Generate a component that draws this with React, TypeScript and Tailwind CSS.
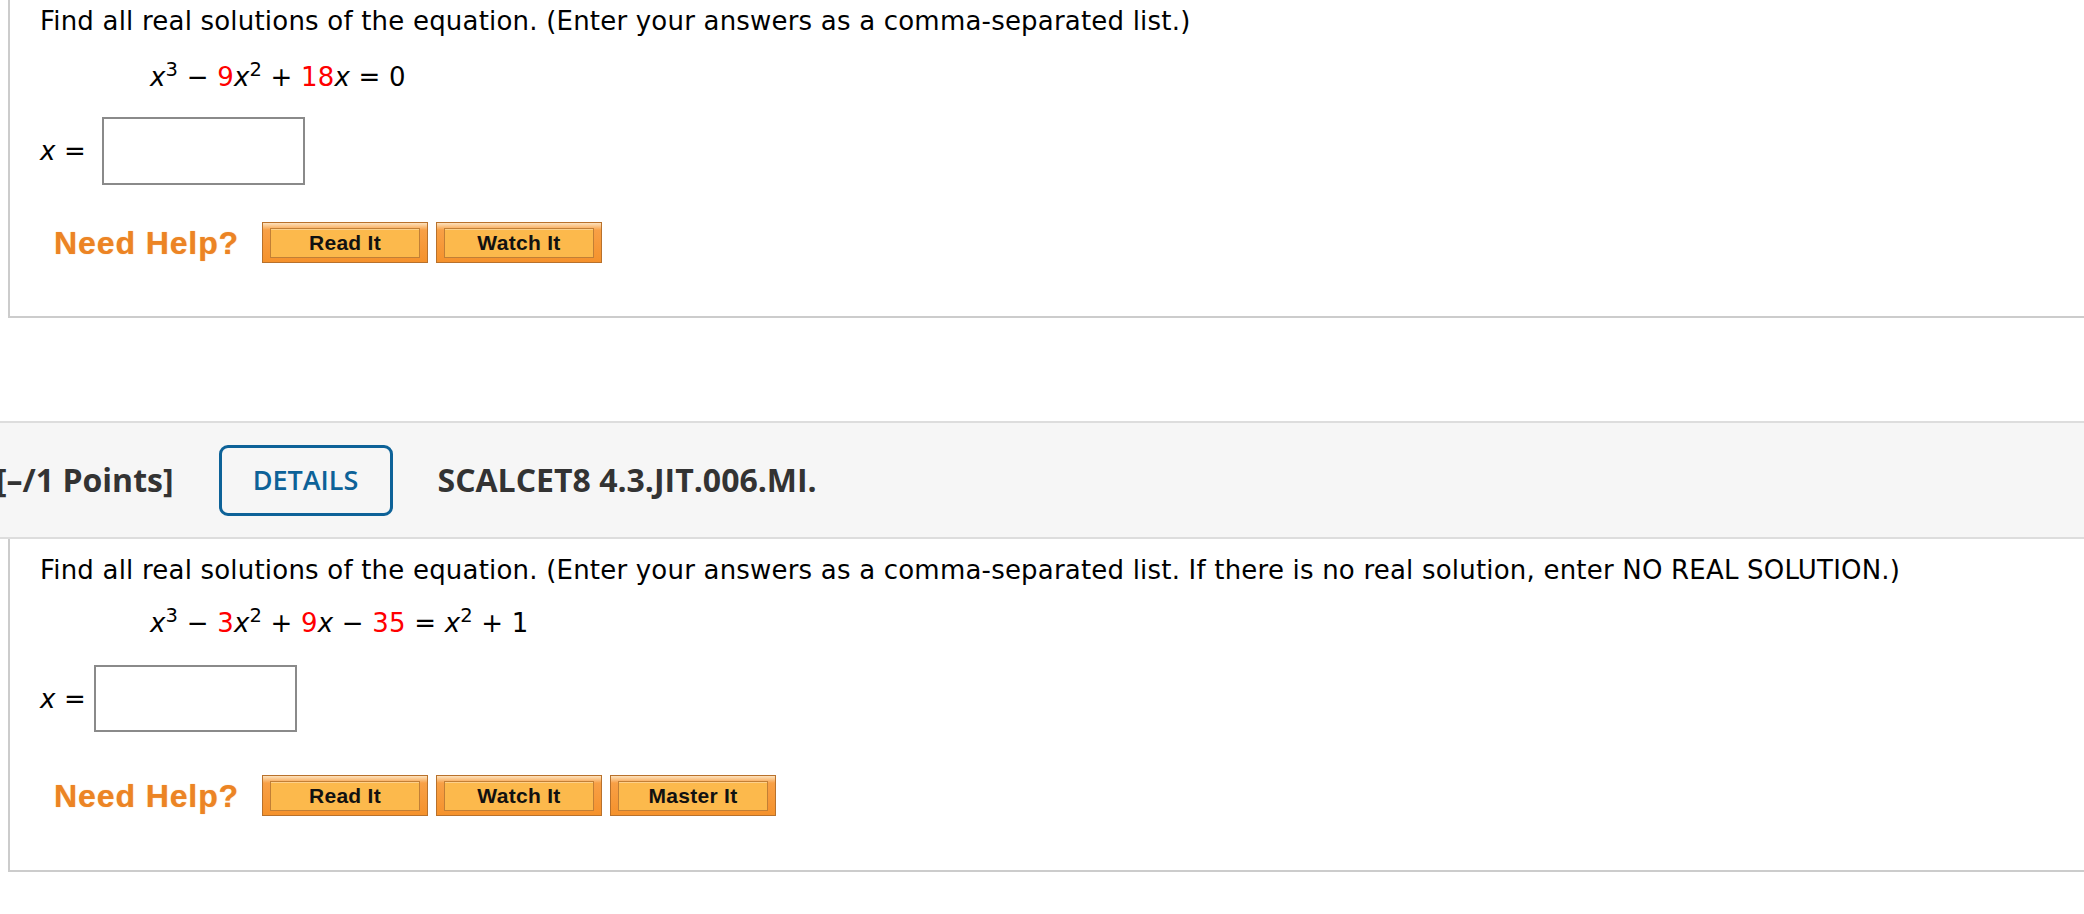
import React from "react"

const body = { fontFamily: "Verdana, 'DejaVu Sans', sans-serif" }
const arial = { fontFamily: "Arial, 'Liberation Sans', sans-serif" }
const open = { fontFamily: "'Open Sans', 'Noto Sans', sans-serif" }

function X() {
  return <i>x</i>
}

function Red({ children }: { children: React.ReactNode }) {
  return <span className="text-[#ff0000]">{children}</span>
}

function HelpButton({ label }: { label: string }) {
  return (
    <div
      className="w-[166px] h-[41px] border border-[#b8712c] px-[7px] pt-[5px] pb-[4px]"
      style={{ background: "linear-gradient(#fde2bd 0%, #f8a046 18%, #f5922c 100%)" }}
    >
      <div
        className="h-full border border-[#c27f35] bg-[#fcb94c] flex items-center justify-center text-[21px] font-bold text-[#111111] tracking-[0.3px]"
        style={{ ...arial, boxShadow: "inset 0 1px 0 #fdd08a" }}
      >
        {label}
      </div>
    </div>
  )
}

function NeedHelp({ buttons }: { buttons: string[] }) {
  return (
    <div className="flex items-center h-[41px]">
      <span
        className="w-[222px] pl-[14px] text-[32px] font-bold text-[#ec8424] tracking-[0.9px]"
        style={{ ...arial, textShadow: "0 0 1px #f5b06a" }}
      >
        Need Help?
      </span>
      <div className="flex gap-[8px]">
        {buttons.map((b) => (
          <HelpButton key={b} label={b} />
        ))}
      </div>
    </div>
  )
}

export default function App() {
  return (
    <div className="w-[2084px] h-[914px] overflow-hidden bg-white text-black" style={body}>
      {/* first question, top clipped */}
      <div className="ml-[8px] border-l-2 border-b-2 border-[#cccccc] pl-[30px] pt-[5px] pb-[53px] text-[26px] leading-[32px] tracking-[0.2px]">
        <div>Find all real solutions of the equation. (Enter your answers as a comma-separated list.)</div>
        <div className="mt-[24px] pl-[110px]">
          <X />
          <sup>3</sup> − <Red>9</Red>
          <X />
          <sup>2</sup> + <Red>18</Red>
          <X /> = 0
        </div>
        <div className="mt-[24px] flex items-center h-[68px]">
          <span className="w-[62px]">
            <X /> =
          </span>
          <div className="w-[203px] h-[68px] border-2 border-[#8a8a8a]" />
        </div>
        <div className="mt-[37px]">
          <NeedHelp buttons={["Read It", "Watch It"]} />
        </div>
      </div>

      <div className="h-[103px]" />

      {/* header band */}
      <div className="h-[118px] border-y-2 border-[#dddddd] bg-[#f6f6f6] flex items-center gap-[45px] text-[#333333]" style={open}>
        <span className="ml-[-4px] text-[32px] font-bold">[–/1 Points]</span>
        <div className="w-[174px] h-[71px] border-[3px] border-[#0d6298] rounded-[9px] flex items-center justify-center text-[27px] font-semibold text-[#0d6298]">
          DETAILS
        </div>
        <span className="text-[32px] font-bold">SCALCET8 4.3.JIT.006.MI.</span>
      </div>

      {/* second question */}
      <div className="ml-[8px] border-l-2 border-b-2 border-[#cccccc] pl-[30px] pt-[15px] pb-[54px] text-[26px] leading-[32px] tracking-[0.2px]">
        <div>
          Find all real solutions of the equation. (Enter your answers as a comma-separated list. If there is no real
          solution, enter NO REAL SOLUTION.)
        </div>
        <div className="mt-[21px] pl-[110px]">
          <X />
          <sup>3</sup> − <Red>3</Red>
          <X />
          <sup>2</sup> + <Red>9</Red>
          <X /> − <Red>35</Red> = <X />
          <sup>2</sup> + 1
        </div>
        <div className="mt-[26px] flex items-center h-[67px]">
          <span className="w-[54px]">
            <X /> =
          </span>
          <div className="w-[203px] h-[67px] border-2 border-[#8a8a8a]" />
        </div>
        <div className="mt-[43px]">
          <NeedHelp buttons={["Read It", "Watch It", "Master It"]} />
        </div>
      </div>
    </div>
  )
}
